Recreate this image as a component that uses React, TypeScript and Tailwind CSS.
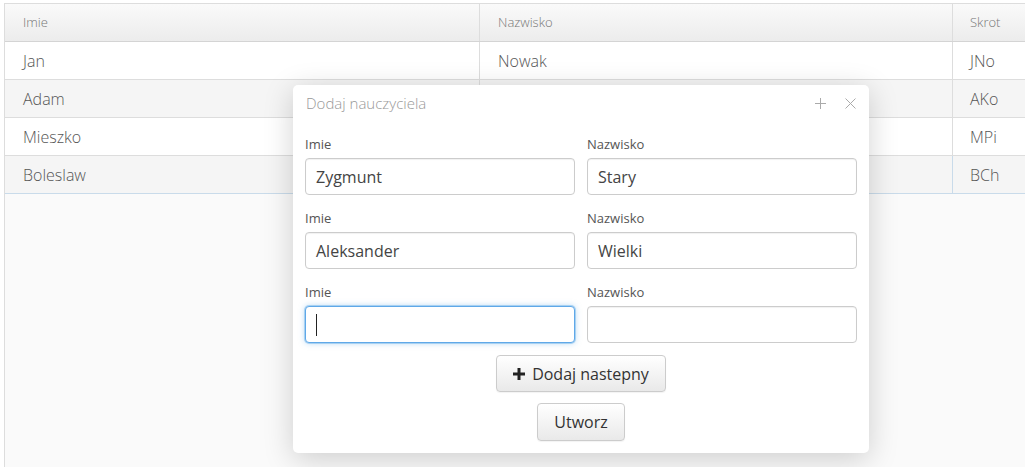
import React from "react";

const rows = [
  { imie: "Jan", nazwisko: "Nowak", skrot: "JNo" },
  { imie: "Adam", nazwisko: "Kowalski", skrot: "AKo" },
  { imie: "Mieszko", nazwisko: "Pierwszy", skrot: "MPi" },
  { imie: "Boleslaw", nazwisko: "Chrobry", skrot: "BCh" },
];

const filled = [
  { imie: "Zygmunt", nazwisko: "Stary" },
  { imie: "Aleksander", nazwisko: "Wielki" },
  { imie: "", nazwisko: "" },
];

function Field({ label, value, focused }: { label: string; value: string; focused?: boolean }) {
  return (
    <div className="flex flex-col">
      <label className="text-[13px] leading-[18px] text-[#555] mb-[5px]">{label}</label>
      <div
        className={
          focused
            ? "relative h-[37px] rounded-[4px] border border-[#5fa8e8] bg-white px-[10px] flex items-center text-[16px] text-[#444] shadow-[0_0_0_1px_rgba(102,175,233,0.45),0_0_6px_rgba(102,175,233,0.5)]"
            : "relative h-[37px] rounded-[4px] border border-[#ccc] bg-white px-[10px] flex items-center text-[16px] text-[#444] shadow-[inset_0_1px_1px_rgba(0,0,0,0.06)]"
        }
      >
        {value}
        {focused && <span className="block w-px h-[22px] bg-[#222]" />}
      </div>
    </div>
  );
}

export default function App() {
  return (
    <div className="relative w-[1025px] h-[467px] overflow-hidden bg-white font-['Open_Sans',sans-serif]">
      {/* table panel */}
      <div className="ml-1 mt-[3px] w-[1040px] h-[480px] border border-[#ddd] bg-[#fafafa]">
        <div className="grid grid-cols-[475px_473px_1fr] h-[38px] bg-gradient-to-b from-[#fafafa] to-[#ececec] border-b border-[#d4d4d4] text-[13px] font-light text-[#777]">
          <div className="flex items-center pl-[18px] border-r border-[#ddd]">Imie</div>
          <div className="flex items-center pl-[18px] border-r border-[#ddd]">Nazwisko</div>
          <div className="flex items-center pl-[17px]">Skrot</div>
        </div>
        {rows.map((r, i) => {
          const last = i === rows.length - 1;
          const bg = i % 2 === 1 ? "bg-[#f5f5f5]" : "bg-white";
          const line = last ? "border-[#c9dbea]" : "border-[#ddd]";
          return (
            <div
              key={r.skrot}
              className={`grid grid-cols-[475px_473px_1fr] h-[38px] border-b ${line} ${bg} text-[16px] font-light text-[#555]`}
            >
              <div className="flex items-center pl-[18px] border-r border-[#ddd]">{r.imie}</div>
              <div className={`flex items-center pl-[18px] border-r ${line}`}>{r.nazwisko}</div>
              <div className="flex items-center pl-[17px]">{r.skrot}</div>
            </div>
          );
        })}
      </div>

      {/* dialog */}
      <div className="absolute left-[293px] top-[85px] w-[576px] h-[368px] rounded-[5px] bg-white shadow-[0_6px_30px_rgba(0,0,0,0.18)] flex flex-col">
        <div className="h-[36px] flex items-center justify-between pl-[13px] pr-[13px]">
          <span className="text-[15px] font-light text-[#999]">Dodaj nauczyciela</span>
          <div className="flex items-center gap-[19px] text-[#aaa]">
            <svg width="11" height="11" viewBox="0 0 11 11" stroke="currentColor" strokeWidth="1">
              <path d="M5.5 0v11M0 5.5h11" />
            </svg>
            <svg width="11" height="11" viewBox="0 0 11 11" stroke="currentColor" strokeWidth="1">
              <path d="M0.5 0.5l10 10M10.5 0.5l-10 10" />
            </svg>
          </div>
        </div>
        <div className="px-3 flex flex-col">
          {filled.map((f, i) => (
            <div key={i} className="grid grid-cols-2 gap-x-3 mt-[14px]">
              <Field label="Imie" value={f.imie} focused={i === 2} />
              <Field label="Nazwisko" value={f.nazwisko} />
            </div>
          ))}
        </div>
        <div className="flex flex-col items-center mt-[12px] gap-[11px]">
          <button className="h-[37px] w-[170px] rounded-[4px] border border-[#ccc] bg-gradient-to-b from-white to-[#e9e9e9] flex items-center justify-center gap-[7px] text-[16px] text-[#333] shadow-[0_1px_1px_rgba(0,0,0,0.05)]">
            <svg width="12" height="12" viewBox="0 0 12 12" fill="#222">
              <rect x="4.5" y="0" width="3" height="12" />
              <rect x="0" y="4.5" width="12" height="3" />
            </svg>
            Dodaj nastepny
          </button>
          <button className="h-[38px] w-[88px] rounded-[4px] border border-[#ccc] bg-gradient-to-b from-white to-[#e9e9e9] text-[16px] text-[#333] shadow-[0_1px_1px_rgba(0,0,0,0.05)]">
            Utworz
          </button>
        </div>
      </div>
    </div>
  );
}
